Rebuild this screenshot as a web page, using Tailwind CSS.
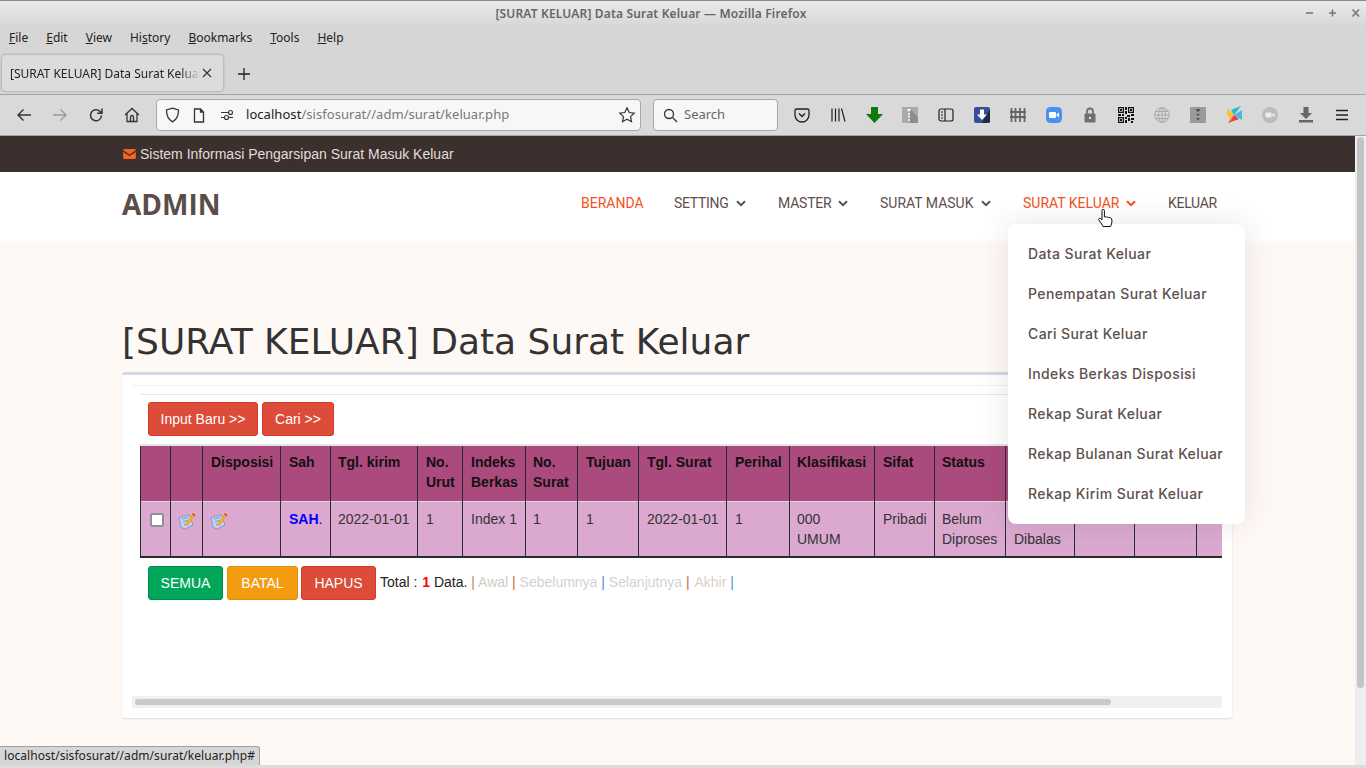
<!DOCTYPE html>
<html lang="en">
<head>
<meta charset="UTF-8">
<title>[SURAT KELUAR] Data Surat Keluar</title>
<script src="https://cdn.jsdelivr.net/npm/@tailwindcss/browser@4"></script>
</head>
<body class="relative w-[1366px] h-[768px] overflow-hidden flex flex-col bg-[#fff9f6] font-['Liberation_Sans',sans-serif]">

<!-- browser window chrome -->
<div class="shrink-0 h-[136px] bg-[#d6d6d6] font-['Noto_Sans',sans-serif] flex flex-col">
  <div class="h-[27px] shrink-0 border-t border-t-[#8a8a8a] bg-gradient-to-b from-[#ebebeb] to-[#d6d6d6] flex items-center relative">
    <div class="w-full pr-[64px] text-center text-[12px] font-semibold tracking-[0.16px] text-[#666]">[SURAT KELUAR] Data Surat Keluar — Mozilla Firefox</div>
    <div class="absolute right-[5px] top-[6px] flex gap-[13px]">
      <svg width="10" height="12" viewBox="0 0 10 12" stroke="#777" stroke-width="1.6" fill="none"><path d="M1 6h7"/></svg>
      <svg width="10" height="12" viewBox="0 0 10 12" stroke="#777" stroke-width="1.6" fill="none"><path d="M1 6h7M4.500 2.500v7"/></svg>
      <svg width="10" height="12" viewBox="0 0 10 12" stroke="#777" stroke-width="1.6" fill="none"><path d="M1.500 2.500l6.500 7M8 2.500l-6.500 7"/></svg>
    </div>
  </div>
  <div class="h-[21px] shrink-0 flex items-center pl-[9px] gap-[18px] text-[12px] text-[#222]">
    <span><u>F</u>ile</span><span><u>E</u>dit</span><span><u>V</u>iew</span><span>Hi<u>s</u>tory</span><span><u>B</u>ookmarks</span><span><u>T</u>ools</span><span><u>H</u>elp</span>
  </div>
  <div class="h-[46px] shrink-0 flex items-start pt-[7px] pl-[2px]">
    <div class="w-[221px] h-[36px] rounded-[4px] bg-[#dcdcdc] shadow-[0_0_3px_rgba(0,0,0,0.35)] flex items-center pl-[8px] pr-[10px] text-[12px] text-[#222]">
      <span class="w-[190px] pt-[1px] overflow-hidden whitespace-nowrap [mask-image:linear-gradient(to_right,black_170px,transparent_190px)]">[SURAT KELUAR] Data Surat Keluar</span>
      <svg class="ml-auto" width="12" height="12" viewBox="0 0 12 12" stroke="#333" stroke-width="1.1" fill="none"><path d="M2 2l8 8M10 2l-8 8"/></svg>
    </div>
    <svg class="ml-[14px] mt-[12px]" width="14" height="14" viewBox="0 0 14 14" stroke="#222" stroke-width="1.3" fill="none"><path d="M7 1v12M1 7h12"/></svg>
  </div>
  <div class="h-[42px] shrink-0 border-y border-y-[#a3a3a3] bg-[#d9d9d9] flex items-center text-[13px]">
    <div class="w-[150px] shrink-0 flex items-center">
      <div class="w-[36px] ml-[6px] flex justify-center"><svg width="16" height="16" viewBox="0 0 16 16" stroke="#333" stroke-width="1.4" fill="none"><path d="M15 8H2M7.500 2.500L2 8l5.500 5.500"/></svg></div>
      <div class="w-[36px] flex justify-center"><svg width="16" height="16" viewBox="0 0 16 16" stroke="#9a9a9a" stroke-width="1.4" fill="none"><path d="M1 8h13M8.500 2.500L14 8l-5.500 5.500"/></svg></div>
      <div class="w-[36px] flex justify-center"><svg width="16" height="16" viewBox="0 0 16 16" stroke="#333" stroke-width="1.5" fill="none"><path d="M13.500 8.500a5.500 5.500 0 1 1-1.700-4.200L14 6.200M14 1.500v4.800H9.300"/></svg></div>
      <div class="w-[35px] flex justify-center"><svg width="16" height="16" viewBox="0 0 16 16" stroke="#333" stroke-width="1.3" fill="none"><path d="M1 8l7-6.500L15 8M3 6.500V14.500h10V6.500M6.500 14.500V10a1.500 1.500 0 0 1 3 0v4.500"/></svg></div>
    </div>
    <div class="ml-[6px] w-[485px] h-[32px] shrink-0 rounded-[4px] border border-[#a8a8a8] bg-[#f7f7f7] flex items-center">
      <svg class="ml-[8px]" width="15" height="16" viewBox="0 0 15 16" stroke="#333" stroke-width="1.3" fill="none"><path d="M7.500 1.200L13.500 3c0 6-1.500 9.500-6 11.800C3 12.500 1.500 9 1.500 3z"/></svg>
      <svg class="ml-[13px]" width="12" height="15" viewBox="0 0 12 15" stroke="#333" stroke-width="1.3" fill="none"><path d="M1.500 1h6l3 3v10h-9zM7.500 1v3h3"/></svg>
      <svg class="ml-[15px]" width="14" height="12" viewBox="0 0 14 12" stroke="#333" stroke-width="1.1" fill="none"><path d="M1 3.500h7M1 8.500h3"/><circle cx="10.500" cy="3.500" r="2"/><circle cx="6.500" cy="8.500" r="2"/><path d="M9 8.500h4"/></svg>
      <span class="ml-[12px] tracking-[0.05px] text-[#222]">localhost<span class="text-[#777]">/sisfosurat//adm/surat/keluar.php</span></span>
      <svg class="ml-auto mr-[4px]" width="18" height="18" viewBox="0 0 18 18" stroke="#333" stroke-width="1.2" fill="none"><path d="M9 1.800l2.200 4.700 5 .6-3.700 3.500 1 5.100L9 13.200l-4.500 2.500 1-5.100L1.800 7.100l5-.6z"/></svg>
    </div>
    <div class="ml-[12px] w-[125px] h-[32px] shrink-0 rounded-[4px] border border-[#a8a8a8] bg-[#f7f7f7] flex items-center text-[#666]">
      <svg class="ml-[9px]" width="15" height="15" viewBox="0 0 15 15" stroke="#333" stroke-width="1.3" fill="none"><circle cx="6" cy="6" r="4.500"/><path d="M9.500 9.500L14 14"/></svg>
      <span class="ml-[6px]">Search</span>
    </div>
    <!-- toolbar buttons and extensions -->
    <div class="ml-[6px] flex items-center">
      <div class="w-[36px] flex justify-center"><svg width="16" height="16" viewBox="0 0 16 16" stroke="#222" stroke-width="1.3" fill="none"><path d="M2.500 2h11A1.500 1.500 0 0 1 15 3.500V8A7 7 0 0 1 1 8V3.500A1.500 1.500 0 0 1 2.500 2z"/><path d="M5 6.500l3 3 3-3" stroke-width="1.5"/></svg></div>
      <div class="w-[36px] flex justify-center"><svg width="16" height="16" viewBox="0 0 16 16" stroke="#222" stroke-width="1.2" fill="none"><path d="M2 1.500v13M5.500 1.500v13M9 1.500v13M11.500 1.500l3.500 13"/></svg></div>
      <div class="w-[36px] flex justify-center"><svg width="17" height="18" viewBox="0 0 17 18" fill="#0d7a0d"><path d="M5 1h7v7h5l-8.500 9L0 8h5z"/></svg></div>
      <div class="w-[36px] flex justify-center"><svg width="16" height="16" viewBox="0 0 16 16"><path fill="#aaa" d="M0 0h16v16H0z"/><path fill="#8c8c8c" d="M8 2l8 8v6H8z"/><path fill="#fff" d="M5.500 2h3v1.500l-1.500 1-1.500-1zM6.300 6h1.400v2H6.300zM5.500 9h3l-1.500 2zM6.300 12h1.400v2H6.300z"/></svg></div>
      <div class="w-[36px] flex justify-center"><svg width="16" height="14" viewBox="0 0 16 14" stroke="#222" stroke-width="1.2" fill="none"><rect x="1" y="1" width="14" height="12" rx="2"/><path d="M7 1v12M3 4h2M3 7h2M3 10h2"/></svg></div>
      <div class="w-[36px] flex justify-center"><svg width="16" height="16" viewBox="0 0 16 16"><rect width="16" height="16" rx="2" fill="#34509a"/><path d="M16 3v11a2 2 0 0 1-2 2H8l4-8z" fill="#1f2a44"/><path fill="#fff" d="M6 2.500h4v5h3l-5 5.500-5-5.500h3z"/></svg></div>
      <div class="w-[36px] flex justify-center"><svg width="16" height="16" viewBox="0 0 16 16" stroke="#666" stroke-width="1.800" fill="none"><path d="M1.500 1v14M5.500 1v14M10 1v14M14.500 1v14M0 5h16M0 10h16"/></svg></div>
      <div class="w-[36px] flex justify-center"><svg width="16" height="16" viewBox="0 0 16 16"><rect width="16" height="16" rx="4.500" fill="#4a90f0"/><rect x="3" y="5" width="7" height="6" rx="1" fill="#fff"/><path fill="#fff" d="M10.500 7.500L13 5.500v5l-2.500-2z"/></svg></div>
      <div class="w-[36px] flex justify-center"><svg width="14" height="16" viewBox="0 0 14 16"><path fill="none" stroke="#707070" stroke-width="1.800" d="M4 7V4.500a3 3 0 0 1 6 0V7"/><rect x="1.500" y="6.500" width="11" height="9" rx="1" fill="#707070"/><circle cx="7" cy="11" r="1.200" fill="#ddd"/></svg></div>
      <div class="w-[36px] flex justify-center"><svg width="16" height="16" viewBox="0 0 16 16" fill="#111"><path d="M0 0h6v6H0zM1.200 1.200v3.600h3.600V1.200zM10 0h6v6h-6zM11.200 1.200v3.600h3.600V1.200zM0 10h6v6H0zM1.200 11.200v3.600h3.600v-3.600z" fill-rule="evenodd"/><path d="M2 2h2v2H2zM12 2h2v2h-2zM2 12h2v2H2zM7 0h2v3H7zM7 4h2v3H7zM0 7h3v2H0zM4 7h2v2H4zM9 8h3v2H9zM13 7h3v2h-3zM7 10h2v2H7zM10 11h2v3h-2zM13 11h3v2h-3zM7 13h2v3H7zM13 14h2v2h-2z"/></svg></div>
      <div class="w-[36px] flex justify-center"><svg width="16" height="16" viewBox="0 0 16 16" stroke="#aaa" stroke-width="1" fill="none"><circle cx="8" cy="8" r="7.300"/><ellipse cx="8" cy="8" rx="3.500" ry="7.300"/><path d="M8 .7v14.600M.7 8h14.600M1.700 4.500h12.600M1.700 11.500h12.600"/></svg></div>
      <div class="w-[36px] flex justify-center"><svg width="16" height="16" viewBox="0 0 16 16"><path fill="#9a9a9a" d="M0 0h16v16H0z"/><path fill="#555" d="M6 2h4v1.500L8 5 6 3.500zM6 7h4L8 9zM6 11h4l-2 2.500z"/></svg></div>
      <div class="w-[36px] flex justify-center"><svg width="16" height="18" viewBox="0 0 16 18"><path fill="#f6c634" d="M1 2l7 7-4 4-3-4z"/><path fill="#2dbbc9" d="M15 0L8 9 5 4z"/><path fill="#49b8e8" d="M16 4v10L8 9z"/><path fill="#e8403c" d="M2 17l6-8 5 4z"/><path fill="#f28b3c" d="M4 13l4-4-3 6z"/></svg></div>
      <div class="w-[36px] flex justify-center"><svg width="16" height="16" viewBox="0 0 16 16"><circle cx="8" cy="8" r="8" fill="#bcbcbc"/><rect x="3.500" y="5.500" width="6" height="5" rx="1" fill="#eee"/><path fill="#eee" d="M10 7.500l2.500-1.500v4L10 8.500z"/></svg></div>
      <div class="w-[36px] flex justify-center"><svg width="16" height="16" viewBox="0 0 16 16" fill="#666"><path d="M5.500 0h5v6H14l-6 6-6-6h3.500z"/><path d="M1 13h14v2.500H1z"/></svg></div>
      <div class="w-[36px] flex justify-center"><svg width="16" height="12" viewBox="0 0 16 12" stroke="#222" stroke-width="1.400" fill="none"><path d="M2 1.500h12M2 6h12M2 10.500h12"/></svg></div>
    </div>
  </div>
</div>

<!-- page viewport -->
<div class="flex-1 min-h-0 flex">
  <div class="flex-1 min-w-0 relative">
    <div class="h-[36px] bg-[#3b302e] flex items-center pl-[123px] text-[14px] text-[#e3dcd9]">
      <svg class="mr-[4px]" width="13" height="10" viewBox="0 0 14 11" fill="#f26522"><path d="M0 1.500A1.500 1.500 0 0 1 1.500 0h11A1.500 1.500 0 0 1 14 1.500L7 6zM0 3.200V9.500A1.500 1.500 0 0 0 1.500 11h11A1.500 1.500 0 0 0 14 9.500V3.200L7 7.700z"/></svg>
      Sistem Informasi Pengarsipan Surat Masuk Keluar
    </div>
    <nav class="h-[69px] bg-white flex items-center justify-between pl-[122px] pr-[138px] pb-[6px] font-['Roboto',sans-serif] text-[14px] text-[#5e504c]">
      <span class="font-['Open_Sans',sans-serif] font-bold text-[28px] text-[#5a4d4a]">ADMIN</span>
      <div class="flex items-center gap-[30px] whitespace-nowrap">
        <span class="w-[63px] text-[#f4511e]">BERANDA</span>
        <span class="flex items-center"><span class="w-[55px] mr-[7px] tracking-[-0.3px]">SETTING</span><svg class="mr-[2px]" width="10" height="7" viewBox="0 0 10 7" fill="none" stroke="currentColor" stroke-width="2"><path d="M1 1.200l4 4 4-4"/></svg></span>
        <span class="flex items-center"><span class="w-[53px] mr-[7px] tracking-[-0.2px]">MASTER</span><svg class="mr-[2px]" width="10" height="7" viewBox="0 0 10 7" fill="none" stroke="currentColor" stroke-width="2"><path d="M1 1.200l4 4 4-4"/></svg></span>
        <span class="flex items-center"><span class="w-[94px] mr-[7px]">SURAT MASUK</span><svg class="mr-[2px]" width="10" height="7" viewBox="0 0 10 7" fill="none" stroke="currentColor" stroke-width="2"><path d="M1 1.200l4 4 4-4"/></svg></span>
        <span class="flex items-center text-[#f4511e]"><span class="w-[96px] mr-[7px]">SURAT KELUAR</span><svg class="mr-[2px]" width="10" height="7" viewBox="0 0 10 7" fill="none" stroke="currentColor" stroke-width="2"><path d="M1 1.200l4 4 4-4"/></svg></span>
        <span class="w-[49px] tracking-[-0.3px]">KELUAR</span>
      </div>
    </nav>

    <main class="pl-[122px] pr-[123px]">
      <h1 class="mt-[81px] font-['DejaVu_Sans',sans-serif] text-[36px] leading-[40px] text-[#333]">[SURAT KELUAR] Data Surat Keluar</h1>
      <div class="mt-[10px] h-[346px] bg-white border-t-[3px] border-t-[#d5d8e3] rounded-[3px] shadow-[0_1px_2px_rgba(120,80,60,0.18)] p-[10px]">
        <div class="border-t border-t-[#f1f1f1] pt-[8px]">
          <div class="mx-[8px] border-t border-t-[#e4e6eb] pt-[7px] h-[302px] relative text-[14px] text-[#333]">
            <div class="flex gap-[4px] ml-[8px]">
              <span class="h-[34px] w-[110px] flex items-center justify-center rounded-[3px] border border-[#d73925] bg-[#dd4b39] text-white">Input Baru &gt;&gt;</span>
              <span class="h-[34px] w-[72px] flex items-center justify-center rounded-[3px] border border-[#d73925] bg-[#dd4b39] text-white">Cari &gt;&gt;</span>
            </div>
            <div class="mt-[8px] w-[1082px] overflow-hidden">
              <table class="table-fixed w-[1100px] border-collapse border-t-2 border-t-[#e4e4e4] leading-[20px]">
                <colgroup>
                  <col class="w-[30px]"><col class="w-[32px]"><col class="w-[78px]"><col class="w-[50px]"><col class="w-[87px]"><col class="w-[45px]"><col class="w-[63px]"><col class="w-[52px]"><col class="w-[61px]"><col class="w-[88px]"><col class="w-[63px]"><col class="w-[85px]"><col class="w-[60px]"><col class="w-[71px]"><col class="w-[69px]"><col class="w-[60px]"><col class="w-[62px]"><col class="w-[44px]">
                </colgroup>
                <thead class="bg-[#ab4b7d] text-[#111]">
                  <tr class="h-[56px] align-top text-left border-b border-b-[#e8d6e4]">
                    <th class="border-x border-x-[#2b2b2b]"></th><th class="border-x border-x-[#2b2b2b]"></th>
                    <th class="border-x border-x-[#2b2b2b] px-[8px] pt-[6px]">Disposisi</th>
                    <th class="border-x border-x-[#2b2b2b] px-[8px] pt-[6px]">Sah</th>
                    <th class="border-x border-x-[#2b2b2b] pl-[7px] pt-[6px]">Tgl. kirim</th>
                    <th class="border-x border-x-[#2b2b2b] px-[8px] pt-[6px]">No. Urut</th>
                    <th class="border-x border-x-[#2b2b2b] px-[8px] pt-[6px]">Indeks Berkas</th>
                    <th class="border-x border-x-[#2b2b2b] pl-[7px] pr-[8px] pt-[6px]">No. Surat</th>
                    <th class="border-x border-x-[#2b2b2b] px-[8px] pt-[6px]">Tujuan</th>
                    <th class="border-x border-x-[#2b2b2b] px-[8px] pt-[6px]">Tgl. Surat</th>
                    <th class="border-x border-x-[#2b2b2b] px-[8px] pt-[6px]">Perihal</th>
                    <th class="border-x border-x-[#2b2b2b] pl-[7px] pt-[6px]">Klasifikasi</th>
                    <th class="border-x border-x-[#2b2b2b] px-[8px] pt-[6px]">Sifat</th>
                    <th class="border-x border-x-[#2b2b2b] pl-[7px] pt-[6px]">Status</th>
                    <th class="border-x border-x-[#2b2b2b] px-[8px] pt-[6px]"></th>
                    <th class="border-x border-x-[#2b2b2b] px-[8px] pt-[6px]"></th>
                    <th class="border-x border-x-[#2b2b2b] px-[8px] pt-[6px]"></th>
                    <th class="border-x border-x-[#2b2b2b]"></th>
                  </tr>
                </thead>
                <tbody class="bg-[#dba9d0]">
                  <tr class="h-[56px] align-top border-b-2 border-b-[#2b2b2b]">
                    <td class="border-x border-x-[#2b2b2b] px-[8px] pt-[11px]"><div class="w-[14px] h-[14px] bg-white border-2 border-[#8f8f9d] rounded-[2px] ml-[1px]"></div></td>
                    <td class="border-x border-x-[#2b2b2b] pt-[10px] pl-[7px]">
                      <svg width="18" height="18" viewBox="0 0 18 18"><path d="M1 5.500L11 2.500 15 13l-8 4-4-1.500z" fill="#bcd2f5" stroke="#7d97cf" stroke-width="1"/><path d="M4 7l6-2M5 10l5-2M6 13l5-2" stroke="#6f8bc9" stroke-width=".9"/><path d="M7.500 11.500L14 2.500l2.500 2L10 13l-3 1z" fill="#f5a623"/><path d="M14 2.500l1-1.500 2.500 2-1 1.500z" fill="#e04b2c"/></svg>
                    </td>
                    <td class="border-x border-x-[#2b2b2b] pt-[10px] pl-[7px]">
                      <svg width="18" height="18" viewBox="0 0 18 18"><path d="M1 5.500L11 2.500 15 13l-8 4-4-1.500z" fill="#bcd2f5" stroke="#7d97cf" stroke-width="1"/><path d="M4 7l6-2M5 10l5-2M6 13l5-2" stroke="#6f8bc9" stroke-width=".9"/><path d="M7.500 11.500L14 2.500l2.500 2L10 13l-3 1z" fill="#f5a623"/><path d="M14 2.500l1-1.500 2.500 2-1 1.500z" fill="#e04b2c"/></svg>
                    </td>
                    <td class="border-x border-x-[#2b2b2b] px-[8px] pt-[7px] text-[#0000ff]"><b>SAH</b>.</td>
                    <td class="border-x border-x-[#2b2b2b] pl-[7px] pt-[7px] whitespace-nowrap">2022-01-01</td>
                    <td class="border-x border-x-[#2b2b2b] px-[8px] pt-[7px]">1</td>
                    <td class="border-x border-x-[#2b2b2b] pl-[8px] pt-[7px] whitespace-nowrap">Index 1</td>
                    <td class="border-x border-x-[#2b2b2b] pl-[7px] pt-[7px]">1</td>
                    <td class="border-x border-x-[#2b2b2b] px-[8px] pt-[7px]">1</td>
                    <td class="border-x border-x-[#2b2b2b] pl-[8px] pt-[7px] whitespace-nowrap">2022-01-01</td>
                    <td class="border-x border-x-[#2b2b2b] px-[8px] pt-[7px]">1</td>
                    <td class="border-x border-x-[#2b2b2b] pl-[7px] pr-[8px] pt-[7px]">000 UMUM</td>
                    <td class="border-x border-x-[#2b2b2b] px-[8px] pt-[7px]">Pribadi</td>
                    <td class="border-x border-x-[#2b2b2b] pl-[7px] pr-[8px] pt-[7px]">Belum Diproses</td>
                    <td class="border-x border-x-[#2b2b2b] px-[8px] pt-[7px]">Belum Dibalas</td>
                    <td class="border-x border-x-[#2b2b2b] px-[8px] pt-[7px]"></td>
                    <td class="border-x border-x-[#2b2b2b] px-[8px] pt-[7px]"></td>
                    <td class="border-x border-x-[#2b2b2b]"></td>
                  </tr>
                </tbody>
              </table>
            </div>
            <div class="mt-[8px] ml-[8px] flex items-start text-[#222]">
              <span class="h-[34px] w-[75px] flex items-center justify-center rounded-[3px] border border-[#008d4c] bg-[#00a65a] text-white">SEMUA</span>
              <span class="ml-[4px] h-[34px] w-[71px] flex items-center justify-center rounded-[3px] border border-[#e08e0b] bg-[#f39c12] text-white">BATAL</span>
              <span class="ml-[3px] h-[34px] w-[75px] flex items-center justify-center rounded-[3px] border border-[#d73925] bg-[#dd4b39] text-white">HAPUS</span>
              <span class="ml-[4px] mt-[6px] leading-[20px] whitespace-pre">Total : <b class="ml-[1px] text-[#ff0000]">1</b> Data. <span class="text-[#c8874a]">|</span> <span class="text-[#d2cbc4]">Awal</span> <span class="text-[#d2693f]">|</span> <span class="text-[#d2d2d6]">Sebelumnya</span> <span class="text-[#4a90d9]">|</span> <span class="text-[#d2d2d6]">Selanjutnya</span> <span class="text-[#d2693f]">|</span> <span class="ml-[1px] text-[#dccfc4]">Akhir</span> <span class="text-[#4a90d9]">|</span></span>
            </div>
          </div>
          <div class="h-[12px] bg-[#f0f0f0] flex items-center pl-[3px]"><div class="h-[6px] w-[976px] rounded-full bg-[#c9c9c9]"></div></div>
        </div>
      </div>
    </main>

    <!-- open dropdown, lies over the table -->
    <div class="absolute left-[1008px] top-[88px] w-[237px] h-[300px] bg-white rounded-[8px] shadow-[0_0_30px_rgba(60,40,40,0.12)] pt-[9px] font-['Inter',sans-serif] text-[14px] tracking-[0.4px] font-medium text-[#5e504c]">
      <div class="h-[40px] pl-[20px] flex items-center">Data Surat Keluar</div>
      <div class="h-[40px] pl-[20px] flex items-center">Penempatan Surat Keluar</div>
      <div class="h-[40px] pl-[20px] flex items-center">Cari Surat Keluar</div>
      <div class="h-[40px] pl-[20px] flex items-center">Indeks Berkas Disposisi</div>
      <div class="h-[40px] pl-[20px] flex items-center">Rekap Surat Keluar</div>
      <div class="h-[40px] pl-[20px] flex items-center">Rekap Bulanan Surat Keluar</div>
      <div class="h-[40px] pl-[20px] flex items-center">Rekap Kirim Surat Keluar</div>
    </div>

    <!-- mouse cursor -->
    <svg class="absolute left-[1098px] top-[73px]" width="17" height="19" viewBox="0 0 17 19"><path d="M4 1.500a1.200 1.200 0 0 1 2.400 0V8l1-.3 1 .3 1 .1 1.200.4 1.500.1 1.400.9.500 2.500-.500 3-1 2.500H5L3 14 .8 11a1.200 1.200 0 0 1 1.700-1.500L4 11z" fill="#fff" stroke="#111" stroke-width="1"/><path d="M6.500 14h.01M8.500 14h.01M10.500 14h.01" stroke="#555"/></svg>
  </div>
  <div class="w-[11px] shrink-0 bg-[#eeeeee] pl-[2px] pt-[1px]"><div class="w-[7px] h-[551px] rounded-full bg-[#c4c4c4]"></div></div>
</div>

<!-- status panel and window edge -->
<div class="absolute left-0 bottom-[3px] h-[19px] w-[260px] bg-[#d6d6d6] border-t border-r border-[#a0a0a0] rounded-tr-[3px] flex items-center pl-[4px] font-['Noto_Sans',sans-serif] text-[12px] tracking-[0.05px] text-[#222]">localhost/sisfosurat//adm/surat/keluar.php#</div>
<div class="absolute left-0 right-0 bottom-0 h-[3px] bg-[#dcdcdc]"></div>
</body>
</html>
